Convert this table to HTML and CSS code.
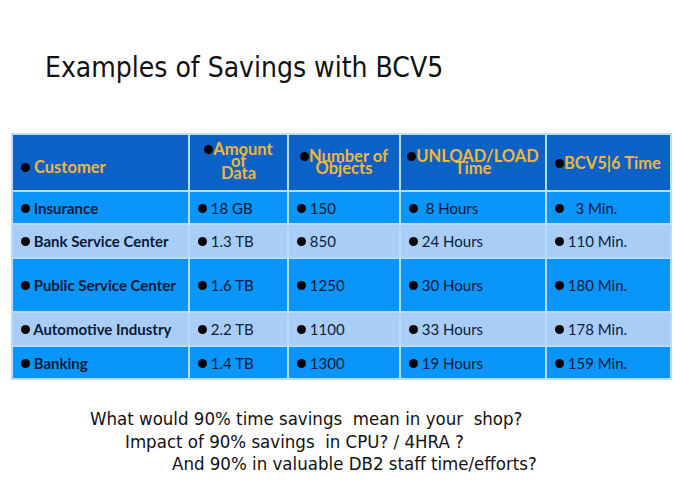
FILE: index.html
```html
<!DOCTYPE html>
<html>
<head>
<meta charset="utf-8">
<link rel="stylesheet" href="styles.css">
</head>
<body>
<div class="slide">
  <h1 class="title">Examples of Savings with BCV5</h1>
  <table class="savings">
    <colgroup>
      <col class="c1"><col class="c2"><col class="c3"><col class="c4"><col class="c5">
    </colgroup>
    <thead>
      <tr class="head">
        <th class="h-customer"><span class="dot"></span> Customer</th>
        <th class="h-top"><span class="dot"></span>Amount<br>of<br>Data</th>
        <th class="h-mid"><span class="dot"></span>Number of<br>Objects</th>
        <th class="h-mid"><span class="dot"></span>UNLOAD/LOAD<br>Time</th>
        <th class="h-one"><span class="dot"></span>BCV5|6 Time</th>
      </tr>
    </thead>
    <tbody>
      <tr class="dark r1">
        <td class="name"><span class="dot"></span> Insurance</td>
        <td><span class="dot"></span> 18 GB</td>
        <td><span class="dot"></span> 150</td>
        <td><span class="dot"></span> &nbsp;8 Hours</td>
        <td><span class="dot"></span> &nbsp;&nbsp;3 Min.</td>
      </tr>
      <tr class="light r2">
        <td class="name"><span class="dot"></span> Bank Service Center</td>
        <td><span class="dot"></span> 1.3 TB</td>
        <td><span class="dot"></span> 850</td>
        <td><span class="dot"></span> 24 Hours</td>
        <td><span class="dot"></span> 110 Min.</td>
      </tr>
      <tr class="dark r3">
        <td class="name"><span class="dot"></span> Public Service Center</td>
        <td><span class="dot"></span> 1.6 TB</td>
        <td><span class="dot"></span> 1250</td>
        <td><span class="dot"></span> 30 Hours</td>
        <td><span class="dot"></span> 180 Min.</td>
      </tr>
      <tr class="light r4">
        <td class="name"><span class="dot"></span> Automotive Industry</td>
        <td><span class="dot"></span> 2.2 TB</td>
        <td><span class="dot"></span> 1100</td>
        <td><span class="dot"></span> 33 Hours</td>
        <td><span class="dot"></span> 178 Min.</td>
      </tr>
      <tr class="dark r5">
        <td class="name"><span class="dot"></span> Banking</td>
        <td><span class="dot"></span> 1.4 TB</td>
        <td><span class="dot"></span> 1300</td>
        <td><span class="dot"></span> 19 Hours</td>
        <td><span class="dot"></span> 159 Min.</td>
      </tr>
    </tbody>
  </table>
  <div class="notes">
    <p class="l1">What would 90% time savings&nbsp; mean in your&nbsp; shop?</p>
    <p class="l2">Impact of 90% savings&nbsp; in CPU? / 4HRA ?</p>
    <p class="l3">And 90% in valuable DB2 staff time/efforts?</p>
  </div>
</div>
</body>
</html>
```

FILE: styles.css
```css
html, body {
  margin: 0;
  padding: 0;
  background: #ffffff;
}

.slide {
  width: 680px;
  height: 488px;
  overflow: hidden;
  background: #ffffff;
  font-family: "DejaVu Sans Condensed", "DejaVu Sans", sans-serif;
  color: #111111;
}

.title {
  margin: 0;
  padding: 52px 0 0 45px;
  height: 133px;
  box-sizing: border-box;
  font-weight: normal;
  font-size: 28px;
  line-height: 32px;
  color: #111111;
}

.savings {
  margin-left: 11px;
  width: 659px;
  border-collapse: collapse;
  table-layout: fixed;
  font-family: Lato, "Liberation Sans", sans-serif;
  font-size: 15px;
  color: #0c1a38;
}

.c1 { width: 177px; }
.c2 { width: 99px; }
.c3 { width: 112px; }
.c4 { width: 146px; }
.c5 { width: 125px; }

.savings th,
.savings td {
  border: 2px solid #b9dcfb;
  padding: 0 0 0 8px;
  vertical-align: middle;
  text-align: left;
  white-space: nowrap;
}

.savings th {
  background: #0b62c6;
  color: #f2b53c;
  font-weight: bold;
  font-size: 16.5px;
  line-height: 12px;
}

.head { height: 57px; }
.r1 { height: 33px; }
.r2 { height: 34px; }
.r3 { height: 54px; }
.r4 { height: 34px; }
.r5 { height: 33px; }

.h-customer {
  padding-top: 8px !important;
}

.h-top {
  vertical-align: top !important;
  text-align: center !important;
  padding: 8px 0 0 0 !important;
}

.h-mid {
  vertical-align: top !important;
  text-align: center !important;
  padding: 15px 0 0 0 !important;
}

.h-one {
  padding-top: 0 !important;
}

.dark td { background: #0a95fa; }
.light td { background: #a8cef8; }

.name { font-weight: bold; }

.dot {
  display: inline-block;
  width: 9px;
  height: 9px;
  border-radius: 50%;
  background: #000000;
  vertical-align: 1px;
}

.notes {
  padding-top: 28px;
  font-size: 18.5px;
  line-height: 22.5px;
  color: #111111;
}

.notes p {
  margin: 0;
}

.l1 { padding-left: 90px; }
.l2 { padding-left: 125px; }
.l3 { padding-left: 172px; }
```
